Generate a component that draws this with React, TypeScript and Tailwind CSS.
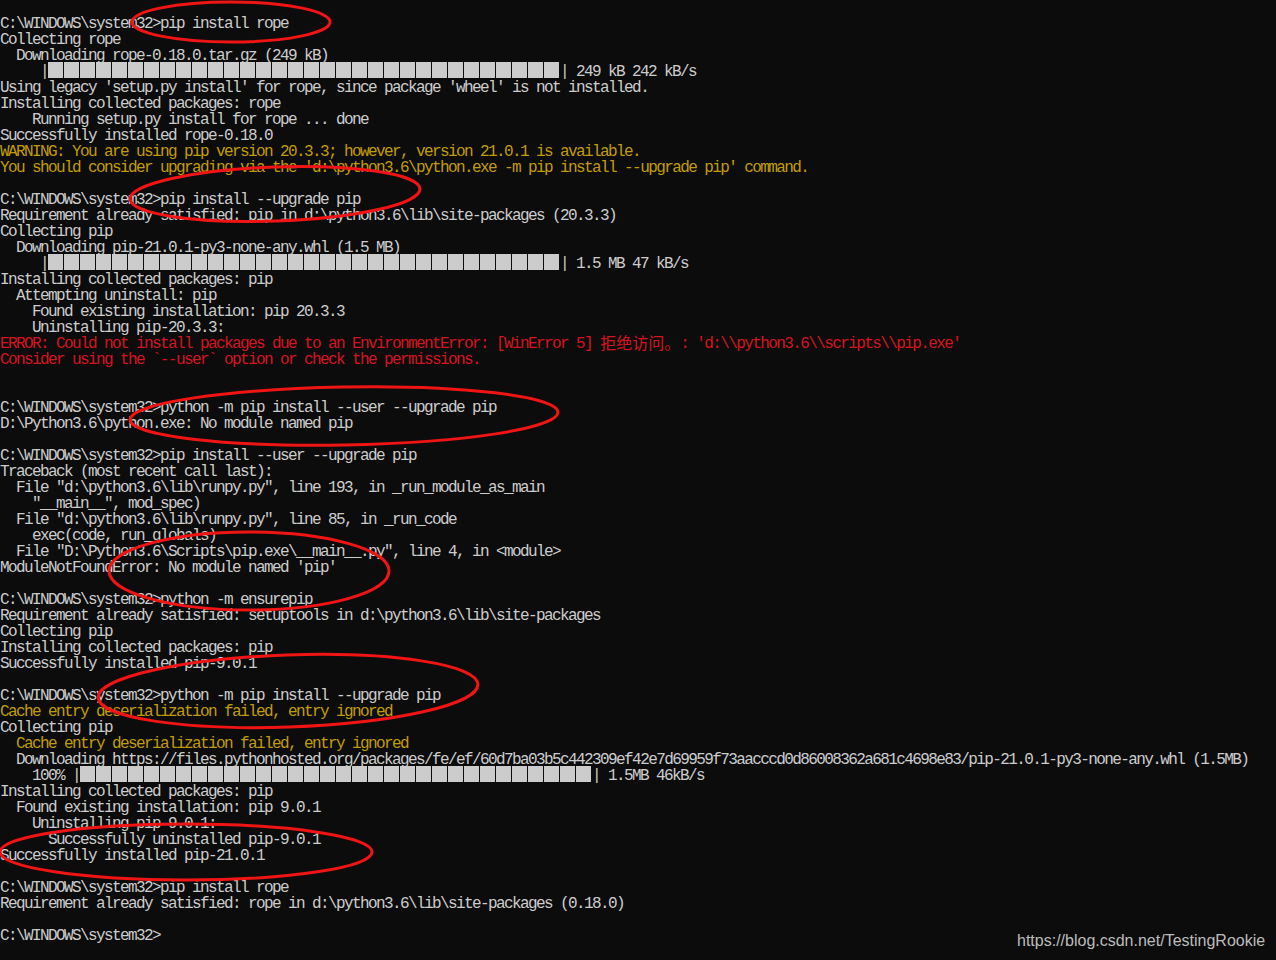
import React from 'react';

type Seg = string | { bar: true } | { cjk: string };
type Line = { c?: 'w' | 'y' | 'r'; s: Seg[] };

const P = 'C:\\WINDOWS\\system32>';
const BAR: Seg = { bar: true };

const lines: Line[] = [
  { s: [P + 'pip install rope'] },
  { s: ['Collecting rope'] },
  { s: ['  Downloading rope-0.18.0.tar.gz (249 kB)'] },
  { s: ['     |', BAR, '| 249 kB 242 kB/s'] },
  { s: ["Using legacy 'setup.py install' for rope, since package 'wheel' is not installed."] },
  { s: ['Installing collected packages: rope'] },
  { s: ['    Running setup.py install for rope ... done'] },
  { s: ['Successfully installed rope-0.18.0'] },
  { c: 'y', s: ['WARNING: You are using pip version 20.3.3; however, version 21.0.1 is available.'] },
  { c: 'y', s: ["You should consider upgrading via the 'd:\\python3.6\\python.exe -m pip install --upgrade pip' command."] },
  { s: [''] },
  { s: [P + 'pip install --upgrade pip'] },
  { s: ['Requirement already satisfied: pip in d:\\python3.6\\lib\\site-packages (20.3.3)'] },
  { s: ['Collecting pip'] },
  { s: ['  Downloading pip-21.0.1-py3-none-any.whl (1.5 MB)'] },
  { s: ['     |', BAR, '| 1.5 MB 47 kB/s'] },
  { s: ['Installing collected packages: pip'] },
  { s: ['  Attempting uninstall: pip'] },
  { s: ['    Found existing installation: pip 20.3.3'] },
  { s: ['    Uninstalling pip-20.3.3:'] },
  {
    c: 'r',
    s: [
      'ERROR: Could not install packages due to an EnvironmentError: [WinError 5] ',
      { cjk: '拒绝访问。' },
      ": 'd:\\\\python3.6\\\\scripts\\\\pip.exe'",
    ],
  },
  { c: 'r', s: ['Consider using the `--user` option or check the permissions.'] },
  { s: [''] },
  { s: [''] },
  { s: [P + 'python -m pip install --user --upgrade pip'] },
  { s: ['D:\\Python3.6\\python.exe: No module named pip'] },
  { s: [''] },
  { s: [P + 'pip install --user --upgrade pip'] },
  { s: ['Traceback (most recent call last):'] },
  { s: ['  File "d:\\python3.6\\lib\\runpy.py", line 193, in _run_module_as_main'] },
  { s: ['    "__main__", mod_spec)'] },
  { s: ['  File "d:\\python3.6\\lib\\runpy.py", line 85, in _run_code'] },
  { s: ['    exec(code, run_globals)'] },
  { s: ['  File "D:\\Python3.6\\Scripts\\pip.exe\\__main__.py", line 4, in <module>'] },
  { s: ["ModuleNotFoundError: No module named 'pip'"] },
  { s: [''] },
  { s: [P + 'python -m ensurepip'] },
  { s: ['Requirement already satisfied: setuptools in d:\\python3.6\\lib\\site-packages'] },
  { s: ['Collecting pip'] },
  { s: ['Installing collected packages: pip'] },
  { s: ['Successfully installed pip-9.0.1'] },
  { s: [''] },
  { s: [P + 'python -m pip install --upgrade pip'] },
  { c: 'y', s: ['Cache entry deserialization failed, entry ignored'] },
  { s: ['Collecting pip'] },
  { c: 'y', s: ['  Cache entry deserialization failed, entry ignored'] },
  {
    s: [
      '  Downloading https://files.pythonhosted.org/packages/fe/ef/60d7ba03b5c442309ef42e7d69959f73aacccd0d86008362a681c4698e83/pip-21.0.1-py3-none-any.whl (1.5MB)',
    ],
  },
  { s: ['    100% |', BAR, '| 1.5MB 46kB/s'] },
  { s: ['Installing collected packages: pip'] },
  { s: ['  Found existing installation: pip 9.0.1'] },
  { s: ['    Uninstalling pip-9.0.1:'] },
  { s: ['      Successfully uninstalled pip-9.0.1'] },
  { s: ['Successfully installed pip-21.0.1'] },
  { s: [''] },
  { s: [P + 'pip install rope'] },
  { s: ['Requirement already satisfied: rope in d:\\python3.6\\lib\\site-packages (0.18.0)'] },
  { s: [''] },
  { s: [P] },
];

function Bar() {
  return (
    <span className="inline-flex align-top h-[16px] tracking-normal">
      {Array.from({ length: 32 }).map((_, i) => (
        <span key={i} className="block w-[15px] h-[16px] mr-[1px] bg-[#cccccc]" />
      ))}
    </span>
  );
}

function colorClass(c?: 'w' | 'y' | 'r') {
  if (c === 'y') return 'text-[#c19c00]';
  if (c === 'r') return 'text-[#d4141f]';
  return 'text-[#cccccc]';
}

export default function App() {
  return (
    <div className="relative w-[1276px] h-[960px] overflow-hidden bg-[#0c0c0c] pt-[14px]">
      <div className="font-['Liberation_Mono','Noto_Sans_CJK_SC',monospace] text-[16px] tracking-[-1.6px]">
        {lines.map((ln, i) => (
          <div key={i} className={`h-[16px] leading-[20px] whitespace-pre ${colorClass(ln.c)}`}>
            {ln.s.map((seg, j) => {
              if (typeof seg === 'string') return <span key={j}>{seg}</span>;
              if ('bar' in seg) return <Bar key={j} />;
              return (
                <span
                  key={j}
                  className="inline-block align-top h-[16px] leading-[16px] overflow-visible font-['Noto_Sans_CJK_SC',sans-serif] tracking-normal"
                >
                  {seg.cjk}
                </span>
              );
            })}
          </div>
        ))}
      </div>

      <svg
        className="absolute left-0 top-0 pointer-events-none"
        width={1276}
        height={960}
        viewBox="0 0 1276 960"
        fill="none"
        stroke="#f01414"
        strokeWidth={3}
      >
        <ellipse cx={231} cy={22} rx={99} ry={20} />
        <ellipse cx={275} cy={194} rx={145} ry={27} transform="rotate(-2 275 194)" />
        <ellipse cx={344} cy={416} rx={214} ry={29} transform="rotate(-1 344 416)" />
        <ellipse cx={249} cy={571} rx={140} ry={39} />
        <ellipse cx={288} cy={691} rx={190} ry={36} transform="rotate(-2 288 691)" />
        <ellipse cx={186} cy={852} rx={186} ry={28} />
      </svg>

      <div className="absolute left-[1017px] top-[931px] font-['Liberation_Sans',Arial,sans-serif] text-[16px] leading-[20px] text-[#bcbcbc]">
        https://blog.csdn.net/TestingRookie
      </div>
    </div>
  );
}
